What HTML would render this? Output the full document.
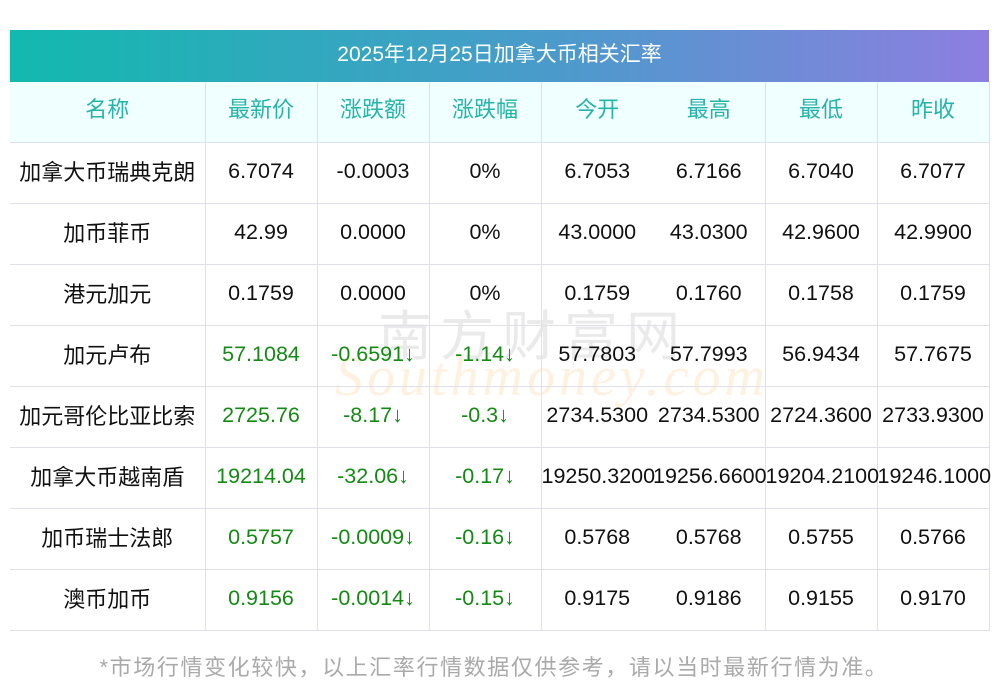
<!DOCTYPE html>
<html><head><meta charset="utf-8"><style>
body{margin:0;background:#fff;width:1000px;height:697px;overflow:hidden;position:relative;font-family:"Liberation Sans","Noto Sans CJK SC",sans-serif;}
.title{position:absolute;left:10px;top:30px;width:979px;height:52px;background:linear-gradient(90deg,#12b9ae,#4a9bcb 55%,#8e7ee0);color:#fff;font-size:21px;line-height:50px;text-align:center;}
table{position:absolute;left:10px;top:82px;width:979px;border-collapse:collapse;table-layout:fixed;}
td{height:60px;border-bottom:1px solid #e0e0ea;border-left:1px solid #e0e0ea;text-align:center;font-size:21.5px;white-space:nowrap;padding:0;color:#111;overflow:visible;}
td span{position:relative;top:-2px;}
tr.h td span{top:-4px;}
td:first-child{border-left:none;font-size:22px;}
td:last-child{border-right:1px solid #e0e0ea;}
td.nb{border-left:none;}
tr.h td{background:#f0ffff;color:#26b3aa;font-size:22px;}
.g{color:#148a14;}
.wm1{position:absolute;left:378px;top:292px;font-size:54px;color:rgba(140,140,140,0.18);letter-spacing:8px;font-family:"Noto Sans CJK SC",sans-serif;}
.wm2{position:absolute;left:335px;top:345px;font-size:56px;font-style:italic;color:rgba(255,190,110,0.22);font-family:"Liberation Serif",serif;letter-spacing:4px;}
.foot{position:absolute;left:0;width:988px;top:650px;text-align:center;color:#aaa;font-size:22px;letter-spacing:1.6px;}
</style></head><body>
<div class="title">2025年12月25日加拿大币相关汇率</div>
<div class="wm1">南方财富网</div>
<div class="wm2">Southmoney.com</div>
<table>
<colgroup><col style="width:195px"><col style="width:112px"><col style="width:112px"><col style="width:112px"><col style="width:112px"><col style="width:112px"><col style="width:112px"><col style="width:112px"></colgroup>
<tr class="h"><td><span>名称</span></td><td><span>最新价</span></td><td><span>涨跌额</span></td><td><span>涨跌幅</span></td><td><span>今开</span></td><td class="nb"><span>最高</span></td><td><span>最低</span></td><td><span>昨收</span></td></tr>
<tr><td><span>加拿大币瑞典克朗</span></td><td><span>6.7074</span></td><td><span>-0.0003</span></td><td><span>0%</span></td><td><span>6.7053</span></td><td class="nb"><span>6.7166</span></td><td><span>6.7040</span></td><td><span>6.7077</span></td></tr>
<tr><td><span>加币菲币</span></td><td><span>42.99</span></td><td><span>0.0000</span></td><td><span>0%</span></td><td><span>43.0000</span></td><td class="nb"><span>43.0300</span></td><td><span>42.9600</span></td><td><span>42.9900</span></td></tr>
<tr><td><span>港元加元</span></td><td><span>0.1759</span></td><td><span>0.0000</span></td><td><span>0%</span></td><td><span>0.1759</span></td><td class="nb"><span>0.1760</span></td><td><span>0.1758</span></td><td><span>0.1759</span></td></tr>
<tr><td><span>加元卢布</span></td><td class="g"><span>57.1084</span></td><td class="g"><span>-0.6591↓</span></td><td class="g"><span>-1.14↓</span></td><td><span>57.7803</span></td><td class="nb"><span>57.7993</span></td><td><span>56.9434</span></td><td><span>57.7675</span></td></tr>
<tr><td><span>加元哥伦比亚比索</span></td><td class="g"><span>2725.76</span></td><td class="g"><span>-8.17↓</span></td><td class="g"><span>-0.3↓</span></td><td><span>2734.5300</span></td><td class="nb"><span>2734.5300</span></td><td><span>2724.3600</span></td><td><span>2733.9300</span></td></tr>
<tr><td><span>加拿大币越南盾</span></td><td class="g"><span>19214.04</span></td><td class="g"><span>-32.06↓</span></td><td class="g"><span>-0.17↓</span></td><td><span>19250.3200</span></td><td class="nb"><span>19256.6600</span></td><td><span>19204.2100</span></td><td><span>19246.1000</span></td></tr>
<tr><td><span>加币瑞士法郎</span></td><td class="g"><span>0.5757</span></td><td class="g"><span>-0.0009↓</span></td><td class="g"><span>-0.16↓</span></td><td><span>0.5768</span></td><td class="nb"><span>0.5768</span></td><td><span>0.5755</span></td><td><span>0.5766</span></td></tr>
<tr><td><span>澳币加币</span></td><td class="g"><span>0.9156</span></td><td class="g"><span>-0.0014↓</span></td><td class="g"><span>-0.15↓</span></td><td><span>0.9175</span></td><td class="nb"><span>0.9186</span></td><td><span>0.9155</span></td><td><span>0.9170</span></td></tr>
</table>
<div class="foot">*市场行情变化较快，以上汇率行情数据仅供参考，请以当时最新行情为准。</div>
</body></html>
